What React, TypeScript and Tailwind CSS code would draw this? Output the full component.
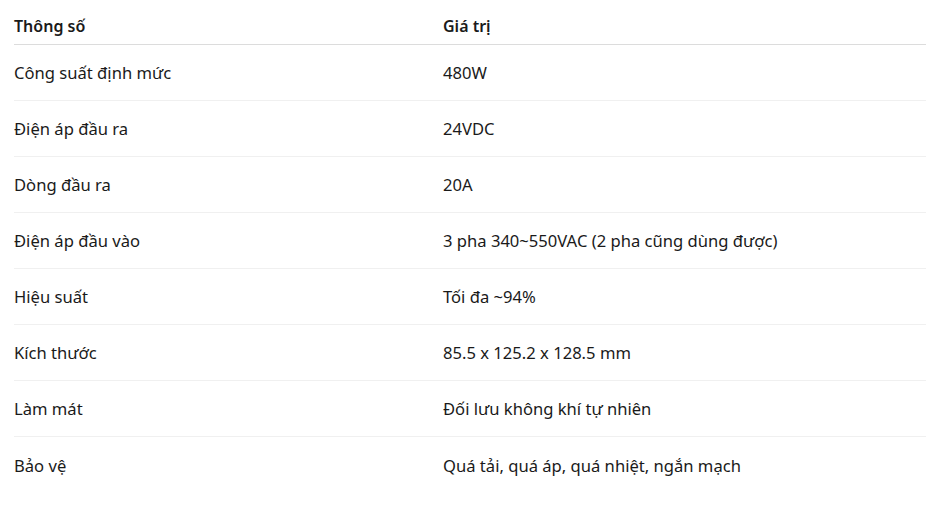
const thongSo = [
  ['Công suất định mức', '480W'],
  ['Điện áp đầu ra', '24VDC'],
  ['Dòng đầu ra', '20A'],
  ['Điện áp đầu vào', '3 pha 340~550VAC (2 pha cũng dùng được)'],
  ['Hiệu suất', 'Tối đa ~94%'],
  ['Kích thước', '85.5 x 125.2 x 128.5 mm'],
  ['Làm mát', 'Đối lưu không khí tự nhiên'],
  ['Bảo vệ', 'Quá tải, quá áp, quá nhiệt, ngắn mạch'],
]

export default function App() {
  return (
    <div className="min-h-screen bg-white pl-[14px] text-[16.6px] text-[#1a1a1a]" style={{ fontFamily: '"Noto Sans", "Open Sans", sans-serif' }}>
      <div className="grid grid-cols-[429px_1fr] border-b border-[#dcdcdc] pt-[15px] pb-[7px] text-[16px] font-semibold leading-[22px]">
        <div>Thông số</div>
        <div>Giá trị</div>
      </div>
      {thongSo.map(([ten, giaTri], i) => (
        <div
          key={ten}
          className={`grid h-[56px] grid-cols-[429px_1fr] items-center pt-px leading-[22px] ${i < thongSo.length - 1 ? 'border-b border-[#f0f0f0]' : ''}`}
        >
          <div>{ten}</div>
          <div>{giaTri}</div>
        </div>
      ))}
    </div>
  )
}
